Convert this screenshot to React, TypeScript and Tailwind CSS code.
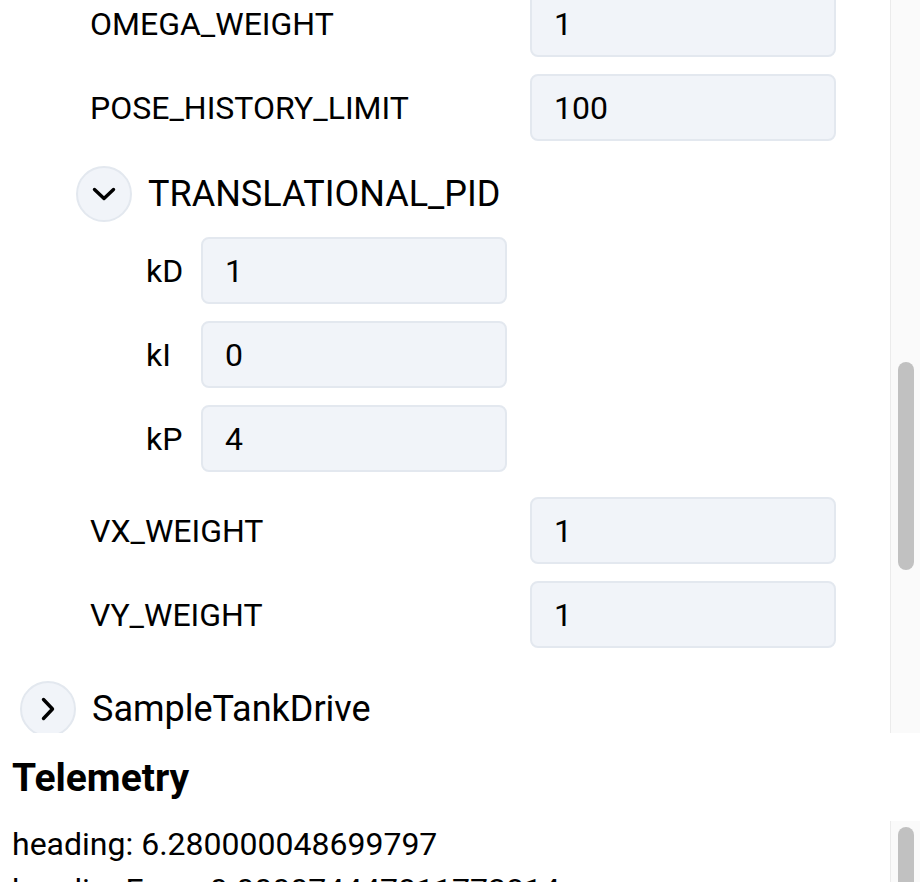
import React from 'react';

type Field = { label: string; value: string };

// visible part of the SampleMecanumDrive group
const topFields: Field[] = [
  { label: 'OMEGA_WEIGHT', value: '1' },
  { label: 'POSE_HISTORY_LIMIT', value: '100' },
];

const pidFields: Field[] = [
  { label: 'kD', value: '1' },
  { label: 'kI', value: '0' },
  { label: 'kP', value: '4' },
];

const bottomFields: Field[] = [
  { label: 'VX_WEIGHT', value: '1' },
  { label: 'VY_WEIGHT', value: '1' },
];

const telemetry = [
  'heading: 6.280000048699797',
  'headingError: 0.000074447811772814',
];

function Chevron({ open }: { open: boolean }) {
  return (
    <svg width="26" height="26" viewBox="0 0 26 26" fill="none" stroke="#000" strokeWidth="3.4" strokeLinecap="round" strokeLinejoin="round">
      {open ? <path d="M3.5 8.5 L13 17.5 L22.5 8.5" /> : <path d="M8.5 3.5 L17.5 13 L8.5 22.5" />}
    </svg>
  );
}

function GroupHeader({ title, open }: { title: string; open: boolean }) {
  return (
    <div className="pt-2 pb-[15px]">
      <div className="flex items-center gap-4 h-14">
        <button className="w-14 h-14 shrink-0 rounded-full bg-[#f1f4f9] border-2 border-[#e3e8ef] flex items-center justify-center">
          <Chevron open={open} />
        </button>
        <span className="text-[36px] text-black whitespace-nowrap">{title}</span>
      </div>
    </div>
  );
}

function FieldRow({ field, labelWidth }: { field: Field; labelWidth: string }) {
  return (
    <div className="flex items-center h-[67px] mb-[17px]">
      <div className={`${labelWidth} shrink-0 pl-[14px] text-[32px] text-black`}>{field.label}</div>
      <div className="w-[306px] h-[67px] rounded-lg bg-[#f1f4f9] border-2 border-[#e3e8ef] px-[22px] flex items-center text-[32px] text-black">
        {field.value}
      </div>
    </div>
  );
}

function Scrollbar({ thumbTop, thumbHeight }: { thumbTop: string; thumbHeight: string }) {
  return (
    <div className="w-[30px] shrink-0 border-l border-[#ebebeb] bg-[#fafafa]">
      <div className={`${thumbTop} ${thumbHeight} ml-[7px] w-[16px] rounded-full bg-[#c1c1c1]`} />
    </div>
  );
}

export default function App() {
  return (
    <div className="w-[920px] h-[882px] overflow-hidden bg-white font-['Roboto','Liberation_Sans',sans-serif] text-black">
      {/* config panel, scrolled */}
      <div className="flex h-[733px]">
        <div className="flex-1 overflow-hidden pl-5">
          <div className="-mt-[10px]">
            <div className="ml-14 pb-2">
              {topFields.map((f) => (
                <FieldRow key={f.label} field={f} labelWidth="w-[454px]" />
              ))}
              <GroupHeader title="TRANSLATIONAL_PID" open />
              <div className="ml-14 pb-2">
                {pidFields.map((f) => (
                  <FieldRow key={f.label} field={f} labelWidth="w-[69px]" />
                ))}
              </div>
              {bottomFields.map((f) => (
                <FieldRow key={f.label} field={f} labelWidth="w-[454px]" />
              ))}
            </div>
            <GroupHeader title="SampleTankDrive" open={false} />
          </div>
        </div>
        <Scrollbar thumbTop="mt-[362px]" thumbHeight="h-[208px]" />
      </div>

      {/* telemetry */}
      <h2 className="px-3 pt-[18px] pb-[16px] text-[39px] leading-[54px] font-bold">Telemetry</h2>
      <div className="flex h-[200px]">
        <div className="flex-1 overflow-hidden px-3">
          {telemetry.map((line) => (
            <div key={line} className="text-[32px] leading-[46px] whitespace-nowrap">{line}</div>
          ))}
        </div>
        <Scrollbar thumbTop="mt-[6px]" thumbHeight="h-[120px]" />
      </div>
    </div>
  );
}
